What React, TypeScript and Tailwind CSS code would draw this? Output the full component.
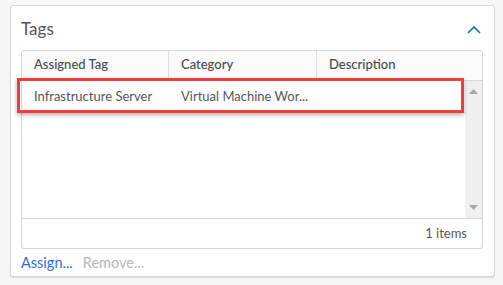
import React from 'react';

const font = { fontFamily: 'Lato, "Open Sans", sans-serif' };

export default function App() {
  return (
    <div className="w-[503px] h-[285px] bg-[#f7f7f7] pt-[5px] pl-[10px]" style={font}>
      <div className="w-[485px] h-[272px] bg-white border border-[#d7d7d7] rounded-[3px] shadow-[0_1px_1px_rgba(0,0,0,0.12)] pl-[10px] pr-[10px] flex flex-col">
        <div className="h-[44px] flex items-center justify-between">
          <span className="text-[17px] text-[#565656] leading-none pt-[2px]">Tags</span>
          <svg width="14" height="9" viewBox="0 0 14 9" className="mr-[3px] mt-[3px]">
            <path d="M1 8 L7 2 L13 8" fill="none" stroke="#0079b8" strokeWidth="1.6" />
          </svg>
        </div>

        <div className="w-[462px] h-[200px] border border-[#d7d7d7] rounded-[3px] flex flex-col">
          <div className="h-[30px] bg-[#fafafa] border-b border-[#d7d7d7] flex text-[13px] font-medium text-[#4a4a4a] rounded-t-[3px] pb-[1px]">
            <div className="w-[147px] border-r border-[#e0e0e0] flex items-center pl-[12px]">Assigned Tag</div>
            <div className="w-[148px] border-r border-[#e0e0e0] flex items-center pl-[12px]">Category</div>
            <div className="flex-1 flex items-center pl-[12px]">Description</div>
          </div>

          <div className="flex-1 flex">
            <div className="flex-1 relative">
              <div className="h-[32px] border-b border-[#e0e0e0] flex items-center text-[13px] text-[#565656]">
                <div className="w-[147px] pl-[12px]">Infrastructure Server</div>
                <div className="w-[148px] pl-[12px] truncate">Virtual Machine Wor...</div>
              </div>
              <div className="absolute left-[-5px] top-[-3px] w-[447px] h-[35px] border-[3px] border-[#f23c3c] shadow-[0_2px_4px_rgba(0,0,0,0.3)]" />
            </div>
            <div className="w-[17px] bg-[#f0f0f0] flex flex-col items-center justify-between py-[8px]">
              <svg width="9" height="5" viewBox="0 0 9 5"><path d="M0 5 L4.5 0 L9 5 Z" fill="#a8a8a8" /></svg>
              <svg width="9" height="5" viewBox="0 0 9 5"><path d="M0 0 L4.5 5 L9 0 Z" fill="#a8a8a8" /></svg>
            </div>
          </div>

          <div className="h-[30px] border-t border-[#d7d7d7] flex items-center justify-end pr-[15px] text-[13px] text-[#565656]">
            1 items
          </div>
        </div>

        <div className="flex items-center gap-[10px] h-[27px] text-[14.5px]">
          <span className="text-[#2b6fd6]">Assign...</span>
          <span className="text-[#b8b8b8]">Remove...</span>
        </div>
      </div>
    </div>
  );
}
